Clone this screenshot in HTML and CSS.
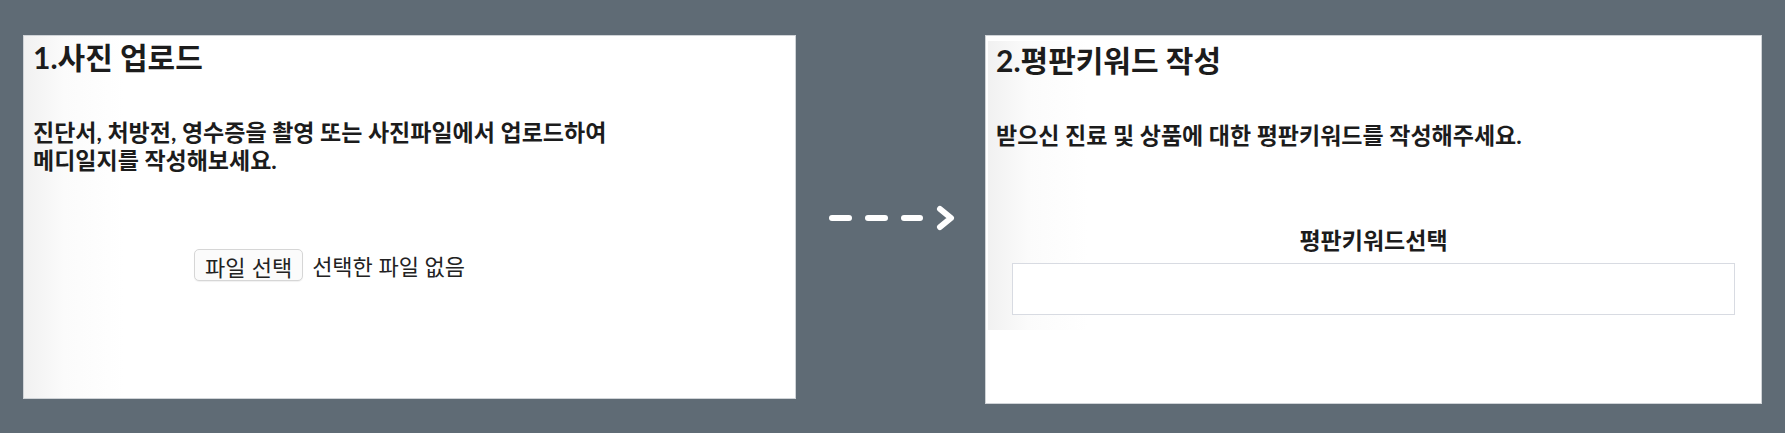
FILE: index.html
```html
<!DOCTYPE html>
<html lang="ko">
<head>
  <meta charset="UTF-8">
  <meta name="viewport" content="width=device-width, initial-scale=1.0">
  <title>메디일지 작성 안내</title>
  <link rel="stylesheet" href="styles.css">
</head>
<body>
  <div class="steps">
    <div class="panel upload">
      <div class="sheet">
        <h2 class="title">1.사진 업로드</h2>
        <p class="desc">진단서, 처방전, 영수증을 촬영 또는 사진파일에서 업로드하여<br>메디일지를 작성해보세요.</p>
        <div class="file-row">
          <button class="file-btn" type="button">파일 선택</button>
          <span class="file-name">선택한 파일 없음</span>
        </div>
      </div>
    </div>

    <div class="arrow">
      <svg width="130" height="30" viewBox="0 0 130 30">
        <g fill="none" stroke="#fff" stroke-width="6" stroke-linecap="round" stroke-linejoin="round">
          <line x1="6" y1="15" x2="23" y2="15"/>
          <line x1="42" y1="15" x2="59" y2="15"/>
          <line x1="78" y1="15" x2="94" y2="15"/>
          <polyline points="114,6 125,15 114,24"/>
        </g>
      </svg>
    </div>

    <div class="panel review">
      <div class="sheet short">
        <h2 class="title">2.평판키워드 작성</h2>
        <p class="desc">받으신 진료 및 상품에 대한 평판키워드를 작성해주세요.</p>
        <div class="field">
          <div class="field-label">평판키워드선택</div>
          <div class="field-box"></div>
        </div>
      </div>
    </div>
  </div>
</body>
</html>
```

FILE: styles.css
```css
* {margin: 0; padding: 0; box-sizing: border-box;}
html, body {height: 100%;}
body {
  background: #5f6b75;
  font-family: Lato, "Noto Sans CJK KR", sans-serif;
  color: #1c1c1c;
}
.steps {
  display: flex;
  align-items: flex-start;
  padding: 35px 23px;
}
.panel {
  background: #fff;
  border: 1px solid #cfd3d7;
}
.upload {
  width: 773px;
  height: 364px;
}
.review {
  width: 777px;
  height: 369px;
}
.sheet {
  height: 100%;
  padding: 2px 9px 0;
  background: linear-gradient(90deg, #f1f1f1 0, #fbfbfb 40px, #fff 100px);
}
.sheet.short {
  height: 289px;
  margin: 5px 2px 0;
  padding: 0 8px;
}
.title {
  font-size: 30px;
  font-weight: 700;
  line-height: 38px;
}
.desc {
  margin-top: 42px;
  font-size: 23px;
  font-weight: 700;
  line-height: 28px;
}
.file-row {
  display: flex;
  align-items: center;
  gap: 9px;
  margin-top: 75px;
  padding-left: 161px;
}
.file-btn {
  height: 32px;
  padding: 0 10px;
  font: 400 22px "Noto Sans CJK KR", sans-serif;
  color: #222;
  background: #fbfbfb;
  border: 1px solid #d6d6d6;
  border-radius: 5px;
  box-shadow: 0 1px 1px rgba(0, 0, 0, 0.06);
}
.file-name {
  font-size: 22px;
  color: #222;
}
.field {
  margin-top: 76px;
  padding: 0 16px;
}
.field-label {
  text-align: center;
  font-size: 23px;
  font-weight: 700;
  line-height: 30px;
}
.field-box {
  height: 52px;
  margin-top: 8px;
  background: #fff;
  border: 1px solid #d8dbe2;
}
.arrow {
  width: 189px;
  display: flex;
  justify-content: center;
  margin-top: 168px;
}
```
